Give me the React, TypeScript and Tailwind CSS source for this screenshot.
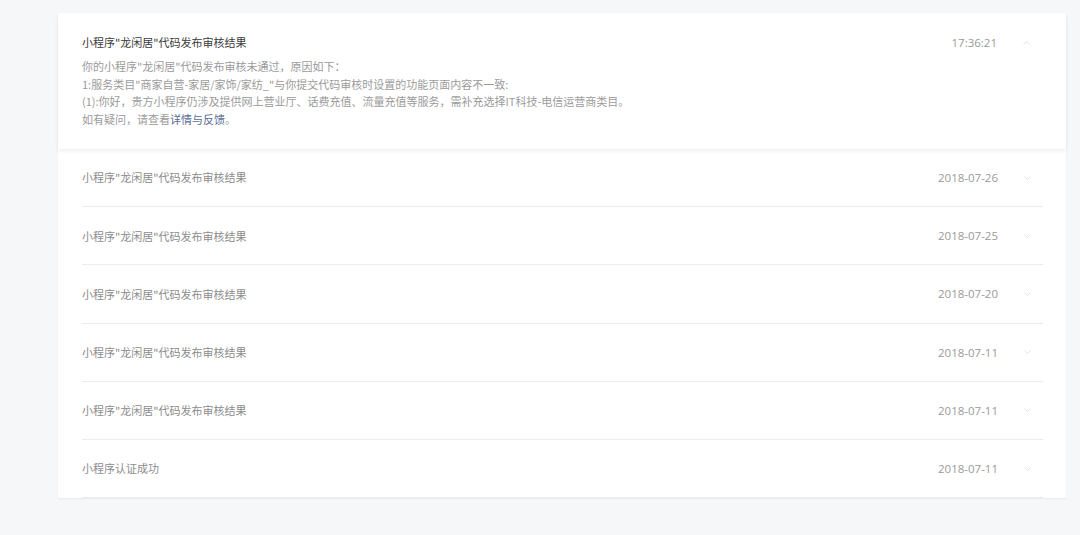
import React from 'react';

interface Notice {
  title: string;
  date: string;
}

const notices: Notice[] = [
  { title: '小程序"龙闲居"代码发布审核结果', date: '2018-07-26' },
  { title: '小程序"龙闲居"代码发布审核结果', date: '2018-07-25' },
  { title: '小程序"龙闲居"代码发布审核结果', date: '2018-07-20' },
  { title: '小程序"龙闲居"代码发布审核结果', date: '2018-07-11' },
  { title: '小程序"龙闲居"代码发布审核结果', date: '2018-07-11' },
  { title: '小程序认证成功', date: '2018-07-11' },
];

const Arrow: React.FC<{ up?: boolean }> = ({ up }) => (
  <svg width="7" height="4" viewBox="0 0 7 4" className={up ? 'rotate-180' : ''}>
    <path d="M0.5 0.5 L3.5 3.5 L6.5 0.5" fill="none" stroke="#e2e2e2" strokeWidth="1" />
  </svg>
);

export default function App() {
  return (
    <div
      className="min-h-[535px] w-full bg-[#f6f7f9] pt-[13px] pl-[58px] pr-[14px]"
      style={{ fontFamily: '"Noto Sans CJK SC", "Open Sans", sans-serif' }}
    >
      <div className="w-[1008px] rounded-[2px] bg-white shadow-[0_1px_2px_rgba(0,0,0,0.06)]">
        {/* expanded item */}
        <div className="relative z-10 bg-white px-[24px] pt-[21px] pb-[21px] shadow-[0_2px_4px_rgba(0,0,0,0.07)]">
          <div className="flex items-center pr-[11px]">
            <div className="flex-1 text-[11px] leading-[17px] text-[#3a3a3a]">
              小程序"龙闲居"代码发布审核结果
            </div>
            <div className="text-[11.5px] leading-[17px] text-[#9a9a9a]" style={{ fontFamily: '"Open Sans", sans-serif' }}>
              17:36:21
            </div>
            <div className="ml-[26px] flex w-[8px] items-center">
              <Arrow up />
            </div>
          </div>
          <div className="mt-[7px] text-[11px] leading-[17.5px] text-[#9b9b9b]">
            <p>你的小程序"龙闲居"代码发布审核未通过，原因如下：</p>
            <p>1:服务类目"商家自营-家居/家饰/家纺_"与你提交代码审核时设置的功能页面内容不一致:</p>
            <p>(1):你好，贵方小程序仍涉及提供网上营业厅、话费充值、流量充值等服务，需补充选择IT科技-电信运营商类目。</p>
            <p>
              如有疑问，请查看<span className="text-[#576b95]">详情与反馈</span>。
            </p>
          </div>
        </div>

        {/* collapsed list */}
        <div className="px-[24px] pr-[23px]">
          {notices.map((n, i) => (
            <div key={i} className="flex h-[58.2px] items-center border-b border-[#ececec] pr-[11px]">
              <div className="flex-1 text-[11px] text-[#8c8c8c]">{n.title}</div>
              <div className="text-[11.5px] text-[#9a9a9a]" style={{ fontFamily: '"Open Sans", sans-serif' }}>
                {n.date}
              </div>
              <div className="ml-[26px] flex w-[8px] items-center">
                <Arrow />
              </div>
            </div>
          ))}
        </div>
      </div>
    </div>
  );
}
